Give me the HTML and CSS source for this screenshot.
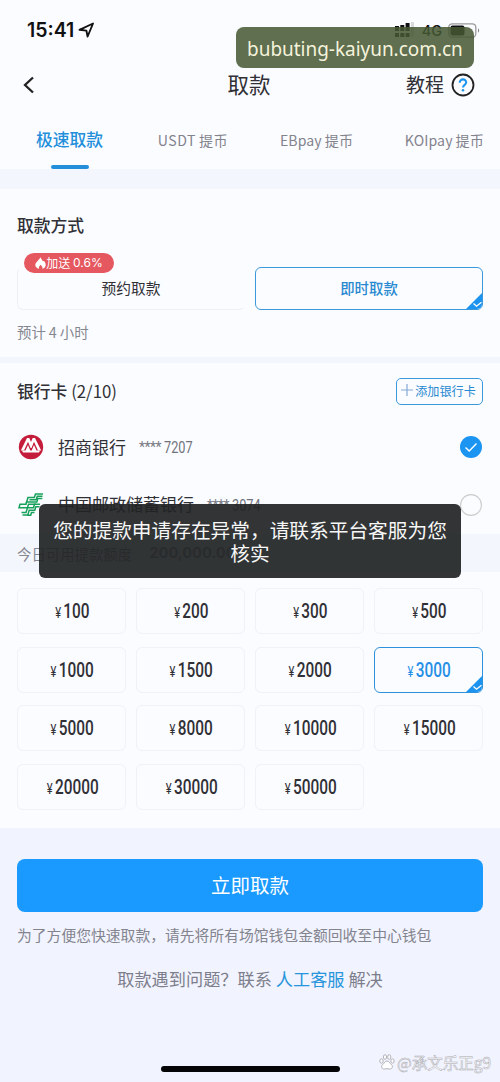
FILE: index.html
```html
<!DOCTYPE html>
<html lang="zh-CN">
<head>
<meta charset="utf-8">
<title>取款</title>
<link rel="stylesheet" href="styles.css">
</head>
<body>
<div class="screen">
  <header class="top">
    <div class="status">
      <span class="time">15:41</span>
      <svg class="loc" width="17" height="16" viewBox="0 0 17 16"><path d="M1.500 7.800 15 1.500 9.600 14.500 8.400 8.600Z" fill="none" stroke="#111" stroke-width="1.900" stroke-linejoin="round"/></svg>
      <svg class="signal" width="20" height="16" viewBox="0 0 20 16"><g fill="#111"><path d="M0 4h4v5H0zM5.300 3h4v6h-4zM10.600 1h4v8h-4zM0 11h4v4H0zM5.300 11h4v4h-4zM10.600 11h4v4h-4z"/><path d="M16 0h3v15h-3z" opacity=".15"/></g></svg>
      <span class="net">4G</span>
      <svg class="battery" width="32" height="15" viewBox="0 0 32 15"><rect x=".8" y=".8" width="27" height="13.400" rx="3.500" fill="none" stroke="#999" stroke-width="1.300"/><rect x="2.500" y="2.500" width="14" height="10" rx="2" fill="#111"/><path d="M30 5.300c1.600.8 1.600 3.600 0 4.400z" fill="#888"/></svg>
    </div>
    <nav class="nav">
      <svg class="back" width="12" height="18" viewBox="0 0 12 18"><path d="M10 1.500 2 9l8 7.500" fill="none" stroke="#222" stroke-width="2.300"/></svg>
      <h1 class="title">取款</h1>
      <div class="help"><span>教程</span><svg width="24" height="24" viewBox="0 0 24 24"><circle cx="12" cy="12" r="10.500" fill="none" stroke="#222" stroke-width="1.800"/><path d="M8.700 9.700C8.700 5.200 15.400 5.500 15.200 9.500 15.100 11.800 12 12 12 14.500" fill="none" stroke="#1e96ee" stroke-width="2.100"/><circle cx="12" cy="17.300" r="1.300" fill="#1e96ee"/></svg></div>
    </nav>
    <div class="tabs">
      <span class="tab active">极速取款</span>
      <span class="tab usdt">USDT<i></i>提币</span>
      <span class="tab">EBpay<i></i>提币</span>
      <span class="tab">KOIpay<i></i>提币</span>
    </div>
  </header>

  <section class="panel method">
    <h2 class="heading">取款方式</h2>
    <div class="options">
      <div class="option plain">预约取款
        <span class="badge"><svg width="11" height="12" viewBox="0 0 11 12"><path d="M5.500.300C6.200 2.200 7.400 3 8 4.500L8.700 3.700C10.400 5.500 11 7 10.500 9 10 10.800 8.500 11.500 7.300 11.800 8 10 6.800 9 5.600 7.700 4.500 9 3.500 10 4 11.800 2.500 11.500.9 10.500.4 8.700-.1 6.500 1.500 5.200 2.800 3.700 3.900 2.500 4.800 1.800 5.500.300Z" fill="#fff"/></svg>加送 <em>0.6%</em></span>
      </div>
      <div class="option selected">即时取款<svg class="corner" width="18" height="18" viewBox="0 0 18 18"><path d="M18 0v18H0z" fill="#1c93ee"/><path d="m8.500 11.500 3 2.700 5-4" fill="none" stroke="#fff" stroke-width="1.300"/></svg></div>
    </div>
    <p class="eta">预计<span>4</span>小时</p>
  </section>

  <section class="panel banks">
    <div class="bank-head">
      <h2 class="heading">银行卡 <span>(2/10)</span></h2>
      <button class="add"><svg width="12" height="12" viewBox="0 0 12 12"><path d="M6 0v12M0 6h12" stroke="#83a8d5" stroke-width="1.200"/></svg>添加银行卡</button>
    </div>
    <div class="bank">
      <svg class="logo" width="26" height="26" viewBox="0 0 26 26"><circle cx="13" cy="13" r="12.200" fill="#c41c3b"/><path d="M2.800 16.500 9 4h2.300L13 8l1.700-4H17l6.200 12.500H20L16 7.800 13.500 14h-1L10 7.800 6 16.500Z" fill="#fff"/><path d="m7.500 16.500 2.500-5.500 2.300 5.500h1.400l2.300-5.500 2.500 5.500h3.500l-1 2H5l-1-2Z" fill="#fff"/></svg>
      <span class="name">招商银行</span><span class="stars">****</span><span class="digits">7207</span>
      <svg class="radio" width="22" height="22" viewBox="0 0 22 22"><circle cx="11" cy="11" r="11" fill="#1b94f2"/><path d="m5.500 11.500 3.700 3.500 7.300-7.500" fill="none" stroke="#fff" stroke-width="1.400"/></svg>
    </div>
    <div class="bank second">
      <svg class="logo" width="26" height="26" viewBox="0 0 26 26"><g fill="none" stroke="#16a05a" stroke-width="1.500"><path d="M25 2h-7.500l-1.200 3.500H10L8.600 10h10.200l1-3.500h4.500"/><path d="M24.500 4.300h-5.200l-1.200 3.500h-6.600"/><path d="M8.600 10 8 12.300H2l-1 3.500h5.500M18 12.300H10.500l-1 3.500H3.500"/><path d="M22 12.300h-5.500l-1 3.500H9.500L8 20.500H3.500M21.500 14.800h-3.700l-1 3.500h-5.600L9.800 23H4.500M16.500 20.500h-3l-.8 2.700H9"/></g></svg>
      <span class="name">中国邮政储蓄银行</span><span class="stars">****</span><span class="digits">3074</span>
      <svg class="radio" width="22" height="22" viewBox="0 0 22 22"><circle cx="11" cy="11" r="10.400" fill="none" stroke="#ccc" stroke-width="1.100"/></svg>
    </div>
  </section>

  <div class="limit"><span>今日可用提款额度</span><b>200,000.00</b></div>

  <section class="amounts">
    <div class="amount"><span class="sum"><small>¥</small>100</span></div>
    <div class="amount"><span class="sum"><small>¥</small>200</span></div>
    <div class="amount"><span class="sum"><small>¥</small>300</span></div>
    <div class="amount"><span class="sum"><small>¥</small>500</span></div>
    <div class="amount"><span class="sum"><small>¥</small>1000</span></div>
    <div class="amount"><span class="sum"><small>¥</small>1500</span></div>
    <div class="amount"><span class="sum"><small>¥</small>2000</span></div>
    <div class="amount selected"><span class="sum"><small>¥</small>3000</span><svg class="corner" width="18" height="18" viewBox="0 0 18 18"><path d="M18 0v18H0z" fill="#1c93ee"/><path d="m8.500 11.500 3 2.700 5-4" fill="none" stroke="#fff" stroke-width="1.300"/></svg></div>
    <div class="amount"><span class="sum"><small>¥</small>5000</span></div>
    <div class="amount"><span class="sum"><small>¥</small>8000</span></div>
    <div class="amount"><span class="sum"><small>¥</small>10000</span></div>
    <div class="amount"><span class="sum"><small>¥</small>15000</span></div>
    <div class="amount"><span class="sum"><small>¥</small>20000</span></div>
    <div class="amount"><span class="sum"><small>¥</small>30000</span></div>
    <div class="amount"><span class="sum"><small>¥</small>50000</span></div>
  </section>

  <footer class="bottom">
    <button class="submit">立即取款</button>
    <p class="note">为了方便您快速取款，请先将所有场馆钱包金额回收至中心钱包</p>
    <p class="support">取款遇到问题？联系 <a>人工客服</a> 解决</p>
    <div class="home"></div>
  </footer>

  <div class="domain"><span>bubuting-kaiyun.com.cn</span></div>
  <div class="toast">您的提款申请存在异常，请联系平台客服为您<br>核实</div>
  <div class="watermark"><svg width="16" height="16" viewBox="0 0 16 16"><g fill="#fff" stroke="#aaaab2" stroke-width=".9"><ellipse cx="2.500" cy="7" rx="1.700" ry="2.200"/><ellipse cx="6" cy="3" rx="1.600" ry="2.300"/><ellipse cx="10.200" cy="3" rx="1.600" ry="2.300"/><ellipse cx="13.500" cy="7" rx="1.700" ry="2.200"/><path d="M8 7c2 0 2.500 2 4.300 3.500 2.200 2 .7 4.800-1.600 4.500-2-.4-3.400-.4-5.400 0-2.300.3-3.800-2.500-1.600-4.500C5.500 9 6 7 8 7Z"/></g></svg>@承文乐正g9</div>
</div>
</body>
</html>
```
FILE: styles.css
```css
* { box-sizing: border-box; }
body, h1, h2, p { margin: 0; }
body { background: #f1f3fe; }
button { border: 0; padding: 0; font-family: inherit; }

.screen {
  position: relative;
  width: 500px;
  height: 1082px;
  overflow: hidden;
  background: #f3f6fd;
  color: #303036;
  font-family: "Noto Sans CJK SC", sans-serif;
}

.top { height: 169px; background: #fbfcff; }
.status { display: flex; height: 60px; padding: 0 20px 0 27px; align-items: center; }
.time { font: 600 19.5px/24px Inter, sans-serif; color: #111; letter-spacing: 0; }
.loc { margin-left: 4px; }
.signal { margin-left: auto; }
.net { margin: 2px 6px 0 7px; font: 500 14.5px/18px Inter, sans-serif; color: #111; }

.nav { display: grid; grid-template-columns: 1fr auto 1fr; height: 50px; padding: 0 25px 0 23px; align-items: center; }
.title { font-size: 21.5px; line-height: 28px; font-weight: 400; margin-top: -2px; }
.help { display: flex; justify-content: flex-end; align-items: center; gap: 7px; font-size: 19px; line-height: 28px; }
.help span { margin-top: -2px; }

.tabs { display: flex; height: 59px; padding: 17px 16px 0 36px; justify-content: space-between; }
.tab { font-size: 14.1px; line-height: 26px; color: #83838d; white-space: nowrap; letter-spacing: .1px; }
.tab.usdt { letter-spacing: .5px; margin-left: 3px; }
.tab i { display: inline-block; width: 3px; }
.tab.active { display: flex; flex-direction: column; align-items: center; font-size: 16.8px; line-height: 25px; font-weight: 500; color: #238fdb; letter-spacing: 0; }
.tab.active::after { content: ""; width: 38px; height: 4px; margin-top: 13px; border-radius: 2px; background: #238fdb; }

.panel { padding: 0 17px; background: #fbfcff; }
.heading { font-size: 16.8px; line-height: 26px; font-weight: 500; }
.heading span { font-weight: 400; }

.method { height: 168px; margin-top: 20px; padding-top: 23px; }
.options { display: grid; grid-template-columns: 228px 228px; gap: 10px; margin-top: 29px; }
.option { position: relative; display: flex; height: 43px; padding-bottom: 2px; align-items: center; justify-content: center; border: 1px solid #efeff5; border-radius: 6px; font-size: 14.7px; }
.option.plain { border-top-color: transparent; border-right-color: transparent; }
.option.selected { border: 1.5px solid #3c98dc; color: #2889d1; font-size: 14.4px; font-weight: 500; overflow: hidden; }
.corner { position: absolute; right: -1px; bottom: -1px; }
.badge { position: absolute; left: 6px; top: -15px; display: flex; width: 90px; height: 20px; align-items: center; justify-content: center; border-radius: 10px; background: #e5585f; color: #fff; font-size: 12px; line-height: 18px; white-space: pre; }
.badge em { font: 12px/18px Inter, sans-serif; }
.eta { margin-top: 10px; font-size: 14.4px; line-height: 24px; color: #858790; }
.eta span { margin: 0 3px; }

.banks { height: 171px; margin-top: 6px; padding-top: 14px; }
.bank-head { display: flex; height: 28px; align-items: center; justify-content: space-between; }
.add { display: flex; width: 87px; height: 27px; padding: 0 2px 2px 0; align-items: center; justify-content: center; gap: 2px; border: 1.5px solid #3c98dc; border-radius: 5px; background: transparent; color: #2889d1; font-size: 12.1px; }
.bank { display: flex; height: 58px; align-items: center; margin-left: 1px; }
.bank-head + .bank { margin-top: 13px; }
.name { margin-left: 14px; font-size: 17px; line-height: 26px; }
.second .name { margin-top: -2px; }
.stars { margin-left: 13px; font: 14px/18px Roboto, sans-serif; letter-spacing: -.5px; color: #777983; }
.digits { width: 29px; margin-left: 3px; font: 17px/20px Roboto, sans-serif; color: #71737c; transform: scaleX(.75); transform-origin: 0 50%; }
.radio { margin-left: auto; margin-right: 1px; }

.limit { display: flex; height: 38px; padding: 0 17px; align-items: center; gap: 17px; font-size: 14.4px; color: #858790; }
.limit b { font: 600 15px/20px Inter, sans-serif; }

.amounts { display: grid; grid-template-columns: repeat(4, 109px); grid-auto-rows: 46px; gap: 12.7px 10px; height: 256px; padding: 16px 17px 0; background: #fbfcff; }
.amount { position: relative; display: flex; padding-top: 3px; align-items: center; justify-content: center; border: 1px solid #f1f1f6; border-radius: 6px; overflow: hidden; }
.amount.selected { border: 1.5px solid #2e91dc; color: #2790e6; }
.sum { display: flex; align-items: baseline; gap: 3px; margin-left: 2px; font: 500 20px/24px Roboto, sans-serif; transform: scaleX(.77); }
.sum small { font-size: 14.500px; font-weight: 400; }

.bottom { display: flex; height: 254px; padding: 31px 17px 0; flex-direction: column; background: #f1f3fe; }
.submit { height: 53px; padding-bottom: 2px; border-radius: 8px; background: #1a9aff; color: #fff; font-size: 19.5px; }
.note { margin-top: 11px; font-size: 14.8px; line-height: 24px; color: #83848e; white-space: nowrap; }
.support { margin-top: 19px; font-size: 17.2px; line-height: 26px; color: #7d7e8c; text-align: center; white-space: nowrap; }
.support a { color: #2795dc; }
.home { width: 179px; height: 6px; margin: 74px auto 0; border-radius: 3px; background: #050507; }

.domain { position: absolute; left: 236px; top: 27px; display: flex; width: 238px; height: 41px; justify-content: center; border-radius: 8px; background: rgba(69, 87, 50, .86); color: #f5f3dc; font: 20px/43px "Noto Sans", sans-serif; white-space: nowrap; }
.domain span { transform: scaleX(.947); }
.toast { position: absolute; left: 39px; top: 504px; width: 422px; height: 74px; padding-top: 14px; border-radius: 6px; background: rgba(33, 35, 36, .92); color: #f7f7f7; font-size: 19.7px; line-height: 23px; text-align: center; white-space: nowrap; }
.watermark { position: absolute; right: 9px; top: 1052px; display: flex; align-items: center; gap: 2px; color: #fff; font-size: 15.5px; line-height: 20px; white-space: nowrap; -webkit-text-stroke: .5px #a9a9b1; }
```
